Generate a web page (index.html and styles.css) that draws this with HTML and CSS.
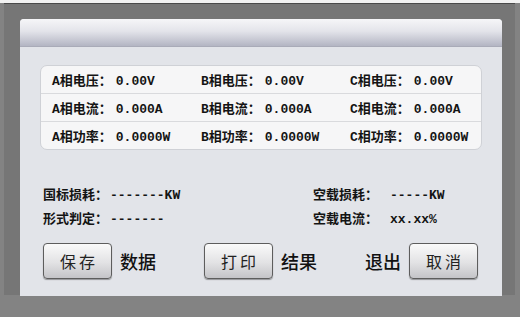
FILE: index.html
```html
<!DOCTYPE html>
<html lang="zh-CN">
<head>
    <meta charset="UTF-8">
    <title>测量结果</title>
    <link rel="stylesheet" href="styles.css">
</head>
<body>
    <div class="screen">
        <div class="frame">
            <div class="panel">
                <div class="panel-head"></div>

                <div class="readings">
                    <div class="row">
                        <div class="cell"><span class="label">A相电压：</span>0.00V</div>
                        <div class="cell"><span class="label">B相电压：</span>0.00V</div>
                        <div class="cell"><span class="label">C相电压：</span>0.00V</div>
                    </div>
                    <div class="row">
                        <div class="cell"><span class="label">A相电流：</span>0.000A</div>
                        <div class="cell"><span class="label">B相电流：</span>0.000A</div>
                        <div class="cell"><span class="label">C相电流：</span>0.000A</div>
                    </div>
                    <div class="row">
                        <div class="cell"><span class="label">A相功率：</span>0.0000W</div>
                        <div class="cell"><span class="label">B相功率：</span>0.0000W</div>
                        <div class="cell"><span class="label">C相功率：</span>0.0000W</div>
                    </div>
                </div>

                <div class="summary">
                    <div class="item"><span class="label">国标损耗：</span>-------KW</div>
                    <div class="item"><span class="label wide">空载损耗：</span>-----KW</div>
                    <div class="item"><span class="label">形式判定：</span>-------</div>
                    <div class="item"><span class="label wide">空载电流：</span>xx.xx%</div>
                </div>

                <div class="actions">
                    <button class="button">保存</button>
                    <span class="caption">数据</span>
                    <button class="button push">打印</button>
                    <span class="caption">结果</span>
                    <span class="caption push">退出</span>
                    <button class="button">取消</button>
                </div>
            </div>
        </div>
    </div>
</body>
</html>
```

FILE: styles.css
```css
html, body {
    margin: 0;
    padding: 0;
}

body {
    width: 520px;
    height: 317px;
    overflow: hidden;
    background-color: #838383;
    font-family: "Liberation Mono", "Noto Sans CJK SC", monospace;
    color: #141414;
}

.screen {
    border-top: 3px solid #f2f2f2;
}

.frame {
    margin-left: 4px;
    width: 511px;
    height: 292px;
    box-sizing: border-box;
    border-top: 1px solid #4a4a4a;
    background-color: #767676;
    padding: 15px 13px 0 16px;
}

.panel {
    height: 277px;
    background-color: #e2e4e9;
    border-radius: 4px 4px 0 0;
    display: flex;
    flex-direction: column;
}

.panel-head {
    height: 27px;
    border-radius: 4px 4px 0 0;
    background: linear-gradient(#f6f6f8, #e3e4ea 45%, #b3b5c3);
    border-bottom: 1px solid #a9abb8;
}

.readings {
    margin: 18px 20px 0 20px;
    background-color: #f6f6f7;
    border: 1px solid #cfd1d6;
    border-radius: 7px;
}

.row {
    display: grid;
    grid-template-columns: 149px 149px auto;
    padding-left: 11px;
    height: 27px;
    align-items: center;
    font-size: 13px;
    font-weight: bold;
}

.row + .row {
    border-top: 1px solid #d9dadd;
}

.label {
    font-family: "Liberation Mono", "Noto Sans CJK SC", monospace;
    font-weight: bold;
    margin-right: 4px;
}

.summary {
    display: grid;
    grid-template-columns: 270px auto;
    margin: 34px 0 0 23px;
    font-size: 13px;
    font-weight: bold;
    line-height: 24px;
}

.summary .label {
    margin-right: 2px;
}

.summary .label.wide {
    margin-right: 12px;
}

.actions {
    display: flex;
    align-items: center;
    gap: 8px;
    margin: 11px 0 0 23px;
}

.button {
    width: 69px;
    height: 36px;
    border: 1px solid #5d5d5d;
    border-radius: 4px;
    background: linear-gradient(#fafafa, #e2e2e4 55%, #c4c4c8);
    box-shadow: 0 1px 1px rgba(0, 0, 0, 0.35);
    font-family: "Noto Sans CJK SC", sans-serif;
    font-size: 16px;
    letter-spacing: 3px;
    padding: 0 0 0 3px;
    color: #222;
}

.caption {
    font-family: "Noto Sans CJK SC", sans-serif;
    font-size: 18px;
    font-weight: 500;
    color: #111;
}

.push {
    margin-left: 40px;
}
```
